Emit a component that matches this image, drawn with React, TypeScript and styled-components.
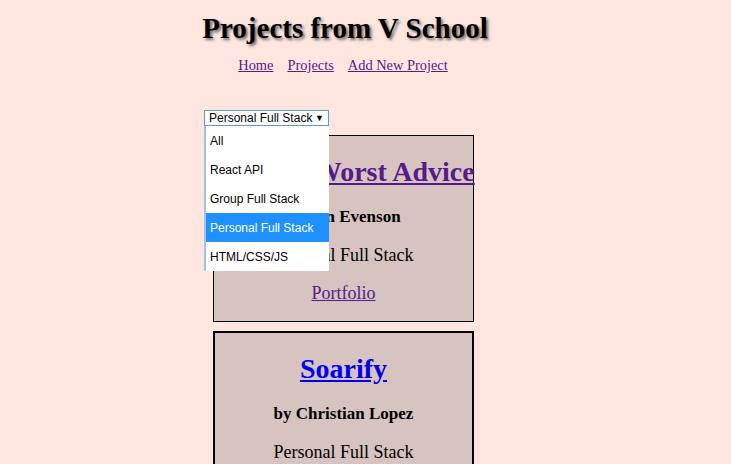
import React from "react";
import styled, { createGlobalStyle } from "styled-components";

const Global = createGlobalStyle`
  html, body { margin: 0; padding: 0; background: #ffe7e0; }
  body { font-family: "Liberation Serif", "Times New Roman", serif; }
`;

const Page = styled.div`
  width: 731px;
  height: 464px;
  overflow: hidden;
  position: relative;
`;

const Column = styled.div`
  margin-left: 196px;
  width: 298px;
  display: flex;
  flex-direction: column;
`;

const Title = styled.h1`
  margin: 11px 0 0;
  font-size: 29px;
  line-height: 34px;
  font-weight: bold;
  text-align: center;
  color: #000;
  text-shadow: 2px 2px 3px #666;
`;

const Nav = styled.nav`
  display: flex;
  justify-content: center;
  gap: 14px;
  margin-top: 11px;
  font-size: 14.4px;
  line-height: 18px;
  padding-right: 4px;
`;

const NavLink = styled.a`
  color: #551a8b;
  text-decoration: underline;
`;

const SelectWrap = styled.div`
  position: relative;
  margin: 36px 0 0 8px;
  width: 125px;
`;

const SelectBox = styled.div`
  box-sizing: border-box;
  width: 125px;
  height: 16px;
  border: 1px solid #5b9bd5;
  background: #fff;
  display: flex;
  align-items: center;
  justify-content: space-between;
  padding: 0 4px 0 4px;
  font-family: "Liberation Sans", Arial, sans-serif;
  font-size: 12px;
  color: #000;
`;

const Arrow = styled.span`
  font-size: 9px;
`;

const List = styled.ul`
  position: absolute;
  left: 0;
  top: 16px;
  width: 125px;
  box-sizing: border-box;
  margin: 0;
  padding: 0;
  list-style: none;
  background: #fff;
  border-left: 2px solid #9cc3ea;
  z-index: 2;
  font-family: "Liberation Sans", Arial, sans-serif;
  font-size: 12px;
`;

const Item = styled.li<{ $active?: boolean }>`
  height: 29px;
  display: flex;
  align-items: center;
  padding-left: 4px;
  background: ${(p) => (p.$active ? "#1e90ff" : "#fff")};
  color: ${(p) => (p.$active ? "#fff" : "#000")};
`;

const Cards = styled.div`
  display: flex;
  flex-direction: column;
  gap: 9px;
  margin: 9px 0 0 17px;
  width: 261px;
`;

const Card = styled.div<{ $thick?: boolean }>`
  box-sizing: border-box;
  background: #d7c4c1;
  border: ${(p) => (p.$thick ? "2px" : "1px")} solid #000;
  display: flex;
  flex-direction: column;
  align-items: center;
  padding: 20px 0 18px;
  text-align: center;
`;

const CardTitle = styled.a<{ $visited?: boolean }>`
  font-size: 28px;
  line-height: 32px;
  font-weight: bold;
  white-space: nowrap;
  color: ${(p) => (p.$visited ? "#551a8b" : "#0000ee")};
  text-decoration: underline;
`;

const Author = styled.div`
  margin-top: 19px;
  font-size: 17px;
  font-weight: bold;
  line-height: 20px;
`;

const Kind = styled.div`
  margin-top: 18px;
  font-size: 18px;
  line-height: 20px;
`;

const Portfolio = styled.a`
  margin-top: 18px;
  font-size: 18px;
  line-height: 20px;
  color: #551a8b;
  text-decoration: underline;
`;

const options = ["All", "React API", "Group Full Stack", "Personal Full Stack", "HTML/CSS/JS"];

export default function App() {
  return (
    <Page>
      <Global />
      <Column>
        <Title>Projects from V School</Title>
        <Nav>
          <NavLink href="#">Home</NavLink>
          <NavLink href="#">Projects</NavLink>
          <NavLink href="#">Add New Project</NavLink>
        </Nav>
        <SelectWrap>
          <SelectBox>
            <span>Personal Full Stack</span>
            <Arrow>▼</Arrow>
          </SelectBox>
          <List>
            {options.map((o) => (
              <Item key={o} $active={o === "Personal Full Stack"}>
                {o}
              </Item>
            ))}
          </List>
        </SelectWrap>
        <Cards>
          <Card>
            <CardTitle $visited href="#">World's Worst Advice</CardTitle>
            <Author>by Jon Evenson</Author>
            <Kind>Personal Full Stack</Kind>
            <Portfolio href="#">Portfolio</Portfolio>
          </Card>
          <Card $thick>
            <CardTitle href="#">Soarify</CardTitle>
            <Author>by Christian Lopez</Author>
            <Kind>Personal Full Stack</Kind>
            <Portfolio href="#">Portfolio</Portfolio>
          </Card>
        </Cards>
      </Column>
    </Page>
  );
}
